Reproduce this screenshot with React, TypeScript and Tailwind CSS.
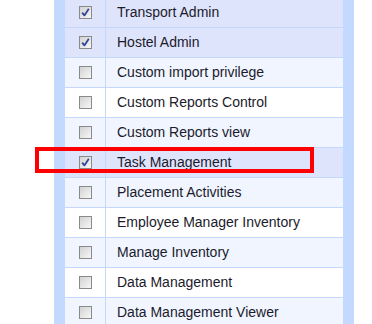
const rows = [
  { label: 'Transport Admin', checked: true, bg: 'bg-[#dfe4fd]' },
  { label: 'Hostel Admin', checked: true, bg: 'bg-[#dfe4fd]' },
  { label: 'Custom import privilege', checked: false, bg: 'bg-[#f0f5ff]' },
  { label: 'Custom Reports Control', checked: false, bg: 'bg-white' },
  { label: 'Custom Reports view', checked: false, bg: 'bg-[#f0f5ff]' },
  { label: 'Task Management', checked: true, bg: 'bg-[#dfe4fd]' },
  { label: 'Placement Activities', checked: false, bg: 'bg-[#f0f5ff]' },
  { label: 'Employee Manager Inventory', checked: false, bg: 'bg-white' },
  { label: 'Manage Inventory', checked: false, bg: 'bg-[#f0f5ff]' },
  { label: 'Data Management', checked: false, bg: 'bg-white' },
  { label: 'Data Management Viewer', checked: false, bg: 'bg-[#f0f5ff]' },
]

function Checkbox({ checked }: { checked: boolean }) {
  return (
    <span className="relative flex h-[13px] w-[13px] items-center justify-center border border-[#8a8a8a] bg-gradient-to-br from-[#d2d2d2] to-[#f7f7f7]">
      {checked && (
        <svg width="9" height="9" viewBox="0 0 9 9" className="absolute left-[1px] top-[1px]">
          <path d="M1.2 4.6 L3.4 7.4 L7.8 0.8" fill="none" stroke="#33449a" strokeWidth="1.8" strokeLinejoin="round" />
        </svg>
      )}
    </span>
  )
}

export default function App() {
  return (
    <div className="relative h-[324px] w-[372px] overflow-hidden bg-white font-['Liberation_Sans',Arial,sans-serif]">
      <div className="ml-[54px] w-[300px] bg-[#c3d9ff] px-[11px]">
        <div className="mt-[-2px] flex flex-col">
          {rows.map((r) => (
            <div key={r.label} className={`flex h-[30px] border-b border-[#c5d8fb] ${r.bg}`}>
              <div className="flex w-[41px] items-center justify-center border-r border-[#c5d8fb] pl-[1px]">
                <Checkbox checked={r.checked} />
              </div>
              <div className="flex items-center pl-[11px] text-[14px] text-[#1b1b2b]">{r.label}</div>
            </div>
          ))}
        </div>
      </div>
      <div className="absolute left-[35px] top-[147px] h-[26px] w-[279px] border-4 border-[#ff0000]" />
    </div>
  )
}
